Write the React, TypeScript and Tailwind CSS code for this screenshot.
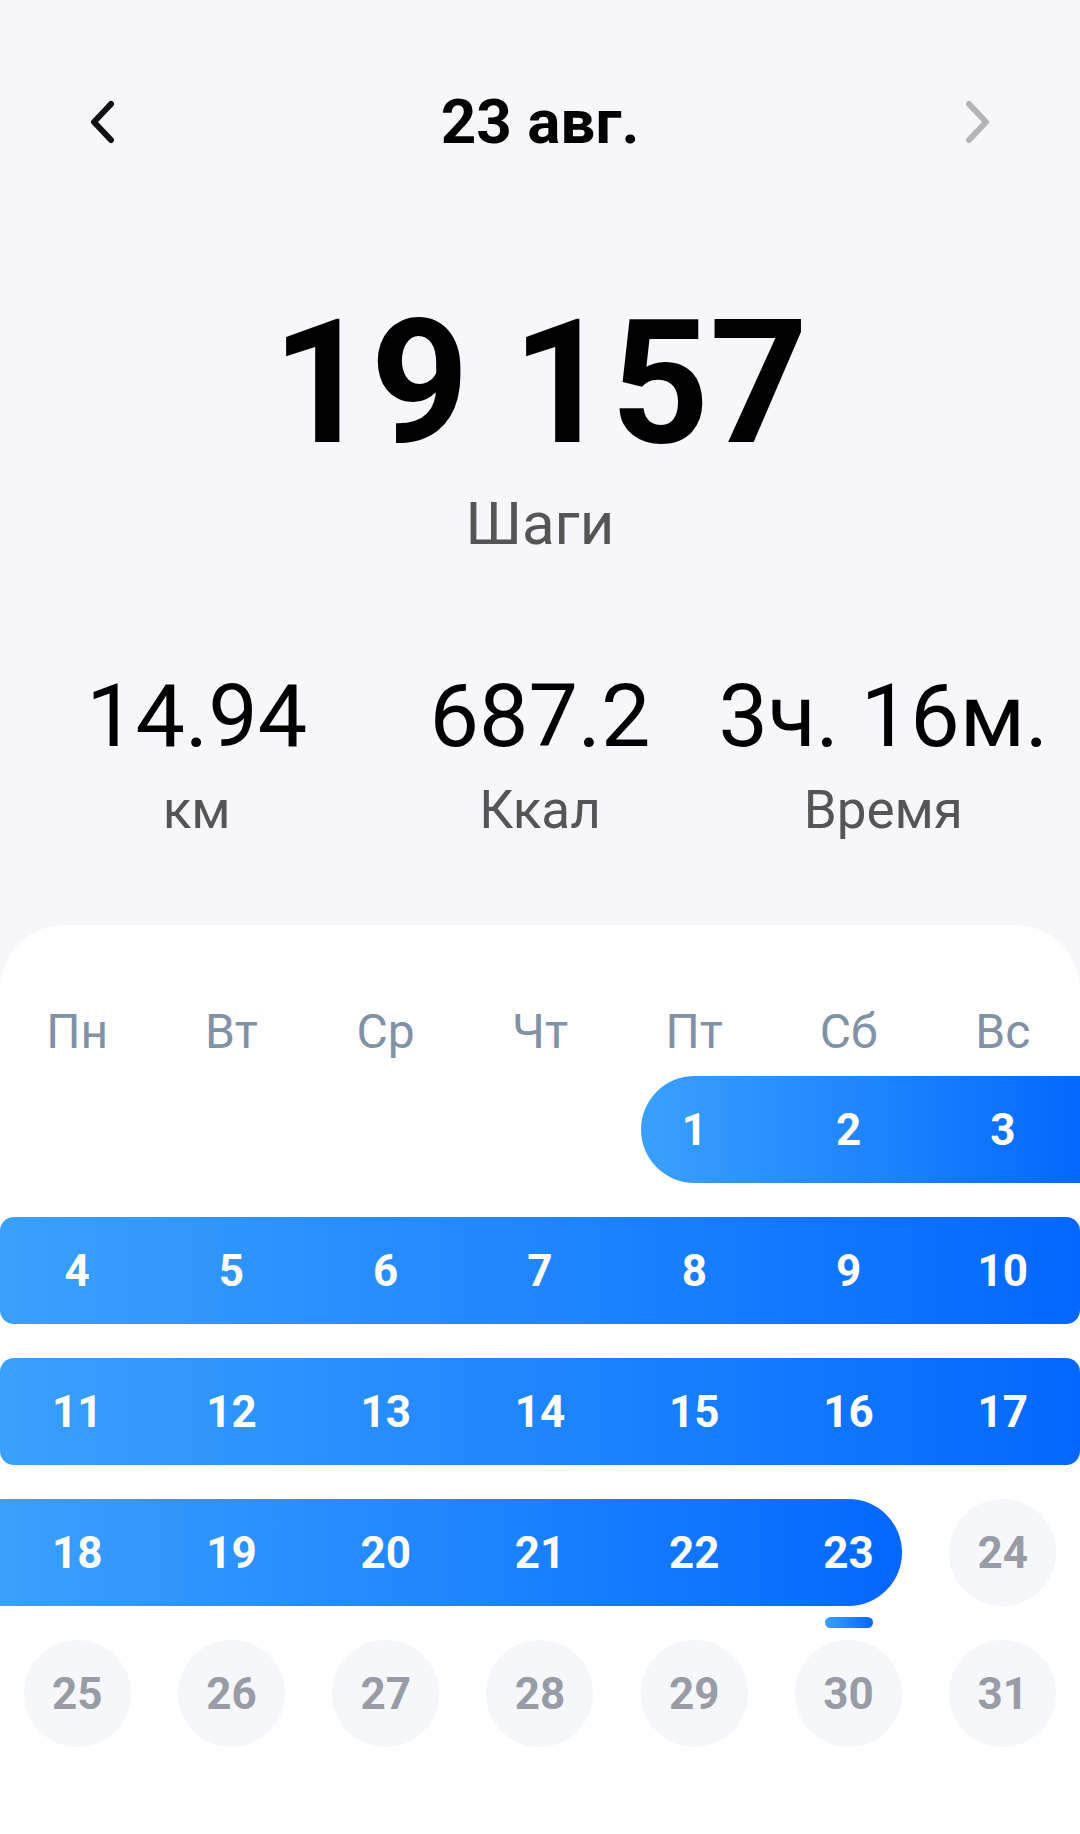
import React from 'react';

const weekdays = ['Пн', 'Вт', 'Ср', 'Чт', 'Пт', 'Сб', 'Вс'];

const colStart = ['col-start-1', 'col-start-2', 'col-start-3', 'col-start-4', 'col-start-5', 'col-start-6', 'col-start-7'];

const pill = 'row-start-1 h-[107px] bg-linear-to-r from-[#3aa0fd] to-[#0567fe]';

function Day({ day, col, active, today }: { day: number; col: number; active: boolean; today?: boolean }) {
  return (
    <div className={`${colStart[col]} row-start-1 relative flex items-center justify-center h-[107px]`}>
      {active ? (
        <span className="text-[44px] leading-none font-bold text-white">{day}</span>
      ) : (
        <span className="w-[107px] h-[107px] rounded-full bg-[#f6f7fb] flex items-center justify-center text-[44px] leading-none font-bold text-[#989ca7]">
          {day}
        </span>
      )}
      {today && (
        <span className="absolute left-1/2 -translate-x-1/2 top-[118px] w-[48px] h-[11px] rounded-full bg-linear-to-r from-[#3aa0fd] to-[#0567fe]" />
      )}
    </div>
  );
}

function Chevron({ dir, color }: { dir: 'left' | 'right'; color: string }) {
  return (
    <svg width="28" height="44" viewBox="0 0 28 44" fill="none">
      <polyline
        points={dir === 'left' ? '23,4 6,22 23,40' : '5,4 22,22 5,40'}
        stroke={color}
        strokeWidth="6"
        strokeLinecap="round"
        strokeLinejoin="round"
      />
    </svg>
  );
}

export default function App() {
  const today = 23;

  return (
    <div className="min-h-[1834px] w-[1080px] bg-[#f7f7fb] font-['Roboto','Noto_Sans',sans-serif] flex flex-col">
      {/* header */}
      <div className="mt-[82px] h-[80px] px-[88px] flex items-center justify-between">
        <Chevron dir="left" color="#111111" />
        <h1 className="text-[62px] leading-none font-bold text-black">23 авг.</h1>
        <Chevron dir="right" color="#b3b3b8" />
      </div>

      {/* steps */}
      <div className="mt-[135px] text-center text-[172px] leading-none font-bold text-black">
        19 157
      </div>
      <div className="mt-[25px] text-center text-[60px] leading-none text-[#555555]">Шаги</div>

      {/* stats */}
      <div className="mt-[118px] px-[25px] grid grid-cols-3 text-center">
        {[
          ['14.94', 'км'],
          ['687.2', 'Ккал'],
          ['3ч. 16м.', 'Время'],
        ].map(([value, label]) => (
          <div key={label} className="flex flex-col items-center">
            <span className="text-[88px] leading-none text-black whitespace-nowrap">{value}</span>
            <span className="mt-[24px] text-[53px] leading-none text-[#555555]">{label}</span>
          </div>
        ))}
      </div>

      {/* calendar card */}
      <div className="mt-[88px] flex-1 bg-white rounded-t-[64px] pt-[83px]">
        <div className="grid grid-cols-7 text-center">
          {weekdays.map((w) => (
            <span key={w} className="text-[48px] leading-none text-[#8191a6]">
              {w}
            </span>
          ))}
        </div>

        <div className="mt-[20px] flex flex-col gap-[34px]">
          {/* week 1 */}
          <div className="grid grid-cols-7">
            <div className={`${pill} col-start-5 col-end-8 ml-[23.6px] rounded-l-full rounded-r-[14px]`} />
            {[1, 2, 3].map((d, i) => (
              <Day key={d} day={d} col={4 + i} active />
            ))}
          </div>

          {/* week 2 */}
          <div className="grid grid-cols-7">
            <div className={`${pill} col-start-1 col-end-8 rounded-[14px]`} />
            {[4, 5, 6, 7, 8, 9, 10].map((d, i) => (
              <Day key={d} day={d} col={i} active />
            ))}
          </div>

          {/* week 3 */}
          <div className="grid grid-cols-7">
            <div className={`${pill} col-start-1 col-end-8 rounded-[14px]`} />
            {[11, 12, 13, 14, 15, 16, 17].map((d, i) => (
              <Day key={d} day={d} col={i} active />
            ))}
          </div>

          {/* week 4 */}
          <div className="grid grid-cols-7">
            <div className={`${pill} col-start-1 col-end-7 mr-[23.6px] rounded-l-[14px] rounded-r-full`} />
            {[18, 19, 20, 21, 22, 23, 24].map((d, i) => (
              <Day key={d} day={d} col={i} active={d <= today} today={d === today} />
            ))}
          </div>

          {/* week 5 */}
          <div className="grid grid-cols-7">
            {[25, 26, 27, 28, 29, 30, 31].map((d, i) => (
              <Day key={d} day={d} col={i} active={false} />
            ))}
          </div>
        </div>
      </div>
    </div>
  );
}
